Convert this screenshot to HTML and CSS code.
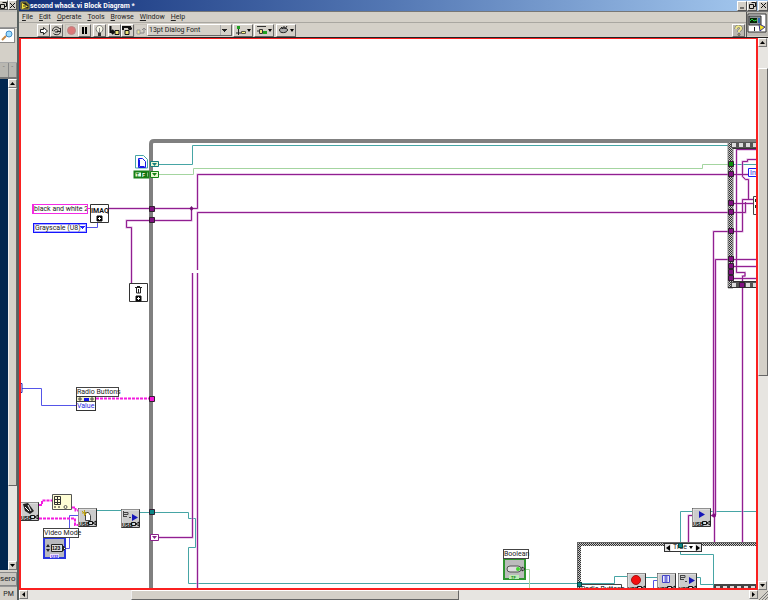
FILE: index.html
```html
<!DOCTYPE html>
<html lang="en">
<head>
<meta charset="utf-8">
<title>second whack.vi Block Diagram</title>
<link rel="stylesheet" href="styles.css">
</head>
<body>
<div class="desktop">
  <aside class="behind">
    <div class="behind-title">
      <button class="win-btn" aria-label="Restore background window"><svg width="7" height="7"><path d="M2.500 .5h4v4h-2M.5 2.500h4v4h-4z" class="ink"/></svg></button>
      <button class="win-btn" aria-label="Close background window"><svg width="7" height="7"><path d="M1 1l5 5M6 1l-5 5" class="ink"/></svg></button>
    </div>
    <div class="behind-menu"></div>
    <div class="behind-search">
      <svg width="15" height="13"><path d="M2 11l4-4" stroke="#c68642" stroke-width="2"/><circle cx="9" cy="5" r="3" fill="#9edcff" stroke="#3f87c5"/></svg>
    </div>
    <div class="behind-gap"></div>
    <div class="behind-tabs"><span>-</span><span>-</span></div>
    <div class="behind-body">
      <div class="navy"></div>
      <div class="scroll vertical">
        <button class="arrow" aria-label="Scroll background up"><svg width="5" height="3"><path d="M0 3L2.500 0L5 3z"/></svg></button>
        <div class="thumb behind-thumb"></div>
        <div class="track behind-track"></div>
        <button class="arrow" aria-label="Scroll background down"><svg width="5" height="3"><path d="M0 0L2.500 3L5 0z"/></svg></button>
      </div>
    </div>
    <div class="task">sero</div>
    <div class="clock">PM</div>
  </aside>

  <main class="window">
    <header class="titlebar">
      <svg width="10" height="10"><path d="M1 1h6v2h2v5H1z" fill="#222" stroke="#a99d35"/><path d="M2 2l6 3.500L2 8z" fill="#f5e33d"/><path d="M3 5h3" stroke="#333"/></svg>
      <h1>second whack.vi Block Diagram *</h1>
      <button class="win-btn" aria-label="Minimize"><svg width="7" height="7"><path d="M1 6h4" class="ink"/></svg></button>
      <button class="win-btn" aria-label="Restore"><svg width="7" height="7"><path d="M2.500 .5h4v4h-2M.5 2.500h4v4h-4z" class="ink"/></svg></button>
      <button class="win-btn close" aria-label="Close"><svg width="7" height="7"><path d="M1 1l5 5M6 1l-5 5" class="ink"/></svg></button>
    </header>

    <div class="bars">
      <div class="bar-rows">
        <nav class="menu">
          <a href="#"><u>F</u>ile</a><a href="#"><u>E</u>dit</a><a href="#"><u>O</u>perate</a><a href="#"><u>T</u>ools</a><a href="#"><u>B</u>rowse</a><a href="#"><u>W</u>indow</a><a href="#"><u>H</u>elp</a>
        </nav>
        <div class="toolbar">
          <button class="tool" aria-label="Run"><svg width="11" height="11"><path d="M2.500 4.500h3v-2l4 3.500l-4 3.500v-2h-3z" fill="#fff" stroke="#222"/></svg></button>
          <button class="tool" aria-label="Run continuously"><svg width="11" height="11"><path d="M1.500 6c0-5 6-5 7-2l1-1v3.500H6l1-1c-1-2-4-1-4 1M9.500 6c0 5-6 4-7 2.500M4 7h3" fill="none" stroke="#222"/></svg></button>
          <button class="tool flat gap" aria-label="Abort"><svg width="11" height="11"><circle cx="5.500" cy="5.500" r="4" fill="#dc7878" stroke="#b98484"/></svg></button>
          <button class="tool" aria-label="Pause"><svg width="11" height="11"><path d="M3 2h2v7H3zM6 2h2v7H6z"/></svg></button>
          <button class="tool gap" aria-label="Highlight execution"><svg width="11" height="11"><path d="M4 7.500C0 4 3 .5 5.500 .5S11 4 7 7.500z" fill="#f7f7e8" stroke="#777"/><path d="M5.500 3v4" stroke="#888"/><path d="M4 8h3v3H4z" fill="#333"/></svg></button>
          <button class="tool gap" aria-label="Step into"><svg width="11" height="11"><path d="M1.500 1v6h3M3 5l2 2l-2 2" fill="none" stroke="#111" stroke-width="2"/><path d="M6 5.500h4v4H6z" fill="#eee37b" stroke="#111"/></svg></button>
          <button class="tool" aria-label="Step over"><svg width="11" height="11"><path d="M1 5V2h7v3M6 3.500h4" fill="none" stroke="#111" stroke-width="2"/><path d="M3 5.500h4v4H3z" fill="#eee37b" stroke="#111"/></svg></button>
          <button class="tool flat" aria-label="Step out"><svg width="11" height="11"><path d="M2 5h3v4H2z" fill="#eee8a0" stroke="#999"/><path d="M5 8h4V3M7 5l2-2l2 2" fill="none" stroke="#888"/></svg></button>
          <select class="font-pick" aria-label="Text settings"><option>13pt Dialog Font</option></select>
          <button class="tool wide" aria-label="Align objects"><svg width="17" height="11"><path d="M2 1h3v3H2z" fill="#20a020"/><path d="M3.500 4v6M1 8h5" stroke="#222"/><path d="M6.500 6.500h4v2h-4z" fill="#fff58a" stroke="#554"/><path d="M12 4h4l-2 3z"/></svg></button>
          <button class="tool wide" aria-label="Distribute objects"><svg width="17" height="11"><path d="M1 1.500h9M1 6h4" stroke="#333"/><path d="M3.500 4.500h3v4h-3z" fill="#eee37b" stroke="#333"/><path d="M7 6h4v3H7z" fill="#20a020"/><path d="M12 4h4l-2 3z"/></svg></button>
          <button class="tool wide gap" aria-label="Reorder"><svg width="17" height="11"><path d="M1.500 5c0-3 8-3 8 0s-8 4-8 0M3 2l2 2M6 1v3M9 1L7 4" fill="#aaa" stroke="#222"/><path d="M12 4h4l-2 3z"/></svg></button>
          <button class="tool help" aria-label="Context help"><svg width="11" height="11"><path d="M3 4c0-4 6-3 5 0L6 6v1" fill="none" stroke="#666" stroke-width="3"/><path d="M3 4c0-4 6-3 5 0L6 6v1" fill="none" stroke="#f2e98c" stroke-width="2"/><circle cx="6" cy="9.500" r="1" fill="#e6db6a" stroke="#555"/></svg></button>
        </div>
      </div>
      <svg class="vi-icon" width="21" height="24"><path d="M1 2h18v18H1z" fill="#fff" stroke="#333"/><path d="M2 4h12v9H2z" fill="#8e959a" stroke="#333"/><path d="M3 6h7v5H3z" fill="#062606"/><path d="M3 9l2-2l2 2l3-1" fill="none" stroke="#20d040"/><path d="M12 6v5" stroke="#2f69b5" stroke-width="2"/><path d="M12 12l6 3l-5 4z" fill="#f1df26" stroke="#35358a"/><path d="M7.500 15v4" stroke="#222"/></svg>
    </div>

    <div class="work">
      <section class="canvas" aria-label="Block diagram">
        <svg class="wires" width="1200" height="1000" viewBox="21 39 1200 1000">
          <defs>
            <pattern id="hatch" width="2" height="2" patternUnits="userSpaceOnUse"><path d="M0 0h2v2H0z" fill="#c9c9c9"/><path d="M0 0h1v1H0zM1 1h1v1H1z" fill="#303030"/></pattern>
            <pattern id="film" width="7" height="6" patternUnits="userSpaceOnUse" x="730" y="142"><path d="M0 0h7v6H0z" fill="#555"/><path d="M2 1h4v4H2z" fill="#ddd"/></pattern>
            <pattern id="film-low" width="7" height="6" patternUnits="userSpaceOnUse" x="730" y="282"><path d="M0 0h7v6H0z" fill="#555"/><path d="M2 1h4v4H2z" fill="#ddd"/></pattern>
            <pattern id="film-case" width="7" height="8" patternUnits="userSpaceOnUse" x="714" y="584"><path d="M0 0h7v8H0z" fill="#444"/><path d="M2 2h4v4H2z" fill="#ddd"/></pattern>
            <g id="camera"><path d="M.5 .5h18v18H.5z" fill="#ccc" stroke="#333"/><path d="M1 18V1h17" fill="none" stroke="#eee"/><path d="M10.500 13.500h4v3h-4zM15 15l3-2v4z" fill="#ddd" stroke="#111"/><text x="1" y="18" class="usb">USB</text></g>
            <g id="cell"><path d="M-2.500-2.500h5v5h-5z" stroke="#302030"/></g>
            <g id="purple-wires" fill="none">
              <path d="M109 208.500H197.500V174.500H730M191.500 208.500V220.500H126.500V227.500H131.500V284"/>
              <path d="M197.500 270V212.500H730M192.500 273V537.500H159M197.500 273V588"/>
              <path d="M730 231.500H713.500V515M730 259.500H715.500V515M714.500 515V543M742.500 286V543M711 515.500H716M688.500 543V515.500H692"/>
              <path d="M757 149.500H736.500V272.500H745V276H742.500V285M757 159.500H747.500V161.500H742.500V176.500L745.500 179.500H748.500V199M733 174.500H748M733 203.500H753M733 231.500H742.500V199.500H753M733 212.500H745.500V202M733 259.500H757M733 266.500H757M733 278.500H757"/>
            </g>
          </defs>

          <g fill="none" stroke="#46a5a5">
            <path d="M159 164.500H192.500V145.500H730M733 164.500H757"/>
            <path d="M97 510.500H121M140 512.500H188.500V518.500H195.500V547.500H188.500V583.500H614.500V576.500H628"/>
            <path d="M692 511.500H680.500V554.500H713.500V588M711 511.500H757M646 577.500H657M697 577.500H700.500V584.500H714"/>
          </g>
          <path d="M159 174.500H193.500V168.500H702.500V164.500H730M526 569.500H529.500V588" fill="none" stroke="#a4d5a0"/>
          <use href="#purple-wires" stroke="#d9a5d9" stroke-width="2"/>
          <use href="#purple-wires" stroke="#911f91"/>
          <path d="M757 141H154q-3 0-3 3V1000" fill="none" stroke="#808080" stroke-width="4"/>

          <g fill="none" stroke="#5555e8"><path d="M86 227.500H97.500V223M22 388.500H41.500V405.500H76M66 548.500H69.500V515.500H78M653.500 588V580.500H657"/></g>
          <path d="M19 383.500h3v9h-3" fill="none" stroke="#2020b0"/>
          <g fill="none" stroke="#f41bdf"><path d="M86 208.500H90"/><path d="M39 505H42V500.500H52M72 507.500H75.500V510.500H78M39 518.500H75V525H78M96 398.500H151" stroke-width="2" stroke-dasharray="3 1"/></g>

          <!-- file path and true/false constants -->
          <path d="M135.500 155.500h8l4 4v8.500h-12z" fill="#fff" stroke="#46a5a5"/><path d="M138.500 158.500h4l3 3v6h-7z" fill="none" stroke="#1717e8"/><path d="M139.500 159.500v7h5" fill="none" stroke="#1717e8"/>
          <path d="M134.500 171.500h14v6h-14z" fill="#e9ffe5" stroke="#168016" stroke-width="2"/><path d="M141 172h6v5h-6z" fill="#127512"/><text x="136" y="177" class="tiny green">T</text><text x="142" y="177" class="tiny white">F</text>
          <path d="M150.500 161.500h8v5h-8z" fill="#e9f7d1" stroke="#157d7d"/><path d="M152 163h5l-2.500 3z" fill="#157d7d"/>
          <path d="M150.500 171.500h8v6h-8z" fill="#e9f7d1" stroke="#148014"/><path d="M152 173h5l-2.500 3z" fill="#148014"/>
          <path d="M150.500 534.500h8v6h-8z" fill="#fff" stroke="#8a218a"/><path d="M152 536h5l-2.500 3z" fill="#8a218a"/>
          <path d="M191.500 206l2 2.500l-2 2.500l-2-2.500z" fill="#711071"/>

          <!-- image functions -->
          <path d="M90.500 204.500h18v18h-18zM129.500 283.500h18v18h-18z" fill="#fff" stroke="#333"/>
          <text x="91" y="213" class="imaq">IMAQ</text>
          <path d="M97 216h5v5h-5zM136 296h5v5h-5z" stroke="#111"/><path d="M98 218.500h3M99.500 217v3M137 298.500h3M138.500 297v3" stroke="#fff"/>
          <path d="M135 287.500h7M137 286.500h3M136.500 288v5h4v-5M138.500 289v4" fill="none" stroke="#222"/>

          <!-- video mode and camera functions -->
          <use href="#camera" x="20" y="502"/><path d="M23 504l5-1l3 4l3 4l-4 3l-5-3z" fill="#222"/><path d="M25 507l4 4M28 505l3 6" stroke="#fff"/>
          <path d="M52.500 494.500h19v15h-19z" fill="#fffed5" stroke="#555"/><path d="M54.500 496.500h6v8h-6zM54 499.500h7M54 502.500h7M57.500 496v8" fill="none" stroke="#333"/><circle cx="65.500" cy="507" r="1.500" fill="none" stroke="#555"/><path d="M54 507h2M58 507h2" stroke="#222"/>
          <use href="#camera" x="78" y="508"/><path d="M85.500 512.500h3l2 3v5h-5z" fill="#fff" stroke="#444"/><path d="M82 513h5M84.500 510v6M82 511l4 4" stroke="#c0a414"/>
          <use href="#camera" x="121" y="509"/><path d="M123 512.500h5v2h-5M123 516.500h4M123.500 511v6M129 517.500h2" fill="none" stroke="#444"/><path d="M132 514l6 3.500l-6 3.500z" fill="#1515b8"/>
          <path d="M44 538h21v20H44z" fill="#b9b9be" stroke="#2835e0" stroke-width="2"/><path d="M46 547l2-3l2 3M46 549l2 3l2-3" fill="#222"/><path d="M51.500 544.500h11v7h-11z" fill="#ddd" stroke="#222"/><text x="52" y="550" class="tiny">123</text><path d="M63.500 546l2 2.500l-2 2z" fill="#fff" stroke="#222"/><path d="M50 554h9v4h-9z" fill="#edf"/><text x="51" y="558" class="micro blue">U32</text>

          <!-- boolean control -->
          <path d="M504 559h21v20h-21z" fill="#bcbcbc" stroke="#309530" stroke-width="2"/><rect x="507" y="566" width="14" height="6" rx="3" fill="#ddd" stroke="#555"/><circle cx="518" cy="569" r="2" fill="#44d632"/><path d="M522 567l3 2l-3 2z" fill="#fff" stroke="#222"/><path d="M509 575h10v4h-10z" fill="#bfedb7"/><text x="511" y="579" class="micro green">TF</text>

          <!-- sequence structure -->
          <path d="M728 142h5v146h-5z" fill="url(#hatch)" stroke="#888"/><path d="M731 142h26v6h-26z" fill="url(#film)"/><path d="M731 282h26v6h-26z" fill="url(#film-low)"/><path d="M733 148.500h24M733 281.500h24M728 287.500h29" stroke="#333"/>
          <path d="M748.500 168.500h9v8h-9z" fill="#fff" stroke="#1c1cf0"/><text x="750" y="175" class="small blue">Int</text><path d="M753.500 196.500h6v18h-6z" fill="#fff" stroke="#444"/><path d="M755 199h2v3h-2zM755 205h2v3h-2z" fill="#1b301b"/>
          <g fill="#811081"><use href="#cell" x="731" y="174"/><use href="#cell" x="731" y="203"/><use href="#cell" x="731" y="212"/><use href="#cell" x="731" y="231"/><use href="#cell" x="731" y="259"/><use href="#cell" x="731" y="266"/><use href="#cell" x="731" y="272"/><use href="#cell" x="731" y="278"/><use href="#cell" x="742" y="285"/><use href="#cell" x="152" y="209"/><use href="#cell" x="152" y="220"/></g>
          <use href="#cell" x="731" y="164" fill="#098f09"/><use href="#cell" x="152" y="399" fill="#f316d6"/><use href="#cell" x="152" y="512" fill="#0b8585"/>

          <!-- case structure -->
          <path d="M577 542h180v4H581v50h-4z" fill="url(#hatch)"/><path d="M577 542.500h180M577.500 542v50" stroke="#666"/>
          <path d="M714 584h43v8h-43z" fill="url(#film-case)"/>
          <path d="M580 584.500h41.500v8" fill="none" stroke="#444"/><text x="581" y="591" class="small">Radio Buttons</text>
          <use href="#camera" x="692" y="508"/><path d="M699 511l6 3.500l-6 3.500z" fill="#1515b8"/><circle cx="714" cy="515.500" r="2" fill="#811081"/>
          <use href="#camera" x="627" y="573"/><circle cx="636" cy="580" r="4.500" fill="#f41010" stroke="#a11"/>
          <use href="#camera" x="657" y="573"/><path d="M662.500 575.500h7v7h-7z" fill="#eef" stroke="#4545c5"/><path d="M666 576v6" stroke="#7777df" stroke-width="3"/>
          <use href="#camera" x="678" y="573"/><path d="M680 575.500h5v2h-5M680 579.500h4M680.500 575v5M685 581.500h2" fill="none" stroke="#444"/><path d="M689 577l6 3.500l-6 3.500z" fill="#1515b8"/>
        </svg>

        <input class="node string" aria-label="Image name" value="black and white 2">
        <select class="node ring" aria-label="Image type"><option>Grayscale (U8)</option></select>
        <span class="node caption radio-label">Radio Buttons</span>
        <div class="node property"><svg width="18" height="5"><path d="M0 0h18v5H0z" fill="#f0edc5"/><path d="M1 2h4M3 0v4M13 2h4M15 0v4" stroke="#444"/><path d="M7 1h5v3H7z" fill="#1010ed"/></svg><span>Value</span></div>
        <span class="node caption video-label">Video Mode</span>
        <span class="node caption boolean-label">Boolean</span>
        <div class="node selector"><button aria-label="Previous case"><svg width="4" height="6"><path d="M4 0v6L0 3z"/></svg></button><span>True</span><svg width="4" height="3"><path d="M0 0h4L2 3z"/></svg><button aria-label="Next case"><svg width="4" height="6"><path d="M0 0v6l4-3z"/></svg></button></div>
        <i class="node tunnel"></i><i class="node tunnel input-tunnel"></i>
      </section>

      <div class="scroll vertical main-v">
        <button class="arrow" aria-label="Scroll up"><svg width="5" height="3"><path d="M0 3L2.500 0L5 3z"/></svg></button>
        <div class="track v-before"></div><div class="thumb v-thumb"></div><div class="track v-after"></div>
        <button class="arrow" aria-label="Scroll down"><svg width="5" height="3"><path d="M0 0L2.500 3L5 0z"/></svg></button>
      </div>
      <div class="scroll horizontal">
        <button class="arrow" aria-label="Scroll left"><svg width="3" height="5"><path d="M3 0v5L0 2.500z"/></svg></button>
        <div class="track h-before"></div><div class="thumb h-thumb"></div><div class="track h-after"></div>
        <button class="arrow" aria-label="Scroll right"><svg width="3" height="5"><path d="M0 0v5l3-2.500z"/></svg></button>
      </div>
      <svg class="grip" width="10" height="10"><path d="M1 10l9-9M4 10l6-6M7 10l3-3" stroke="#777"/></svg>
    </div>
  </main>
</div>
</body>
</html>
```
FILE: styles.css
```css
* { box-sizing: border-box; }
body { margin: 0; background: #d4d0c8; color: #222; font: 7px/9px Roboto, sans-serif; }
button, input, select { font: inherit; color: inherit; margin: 0; padding: 0; border-radius: 0; appearance: none; }
svg { display: block; flex: none; }
.desktop { display: grid; grid-template-columns: 19px minmax(0, 1fr); height: 100vh; overflow: hidden; }

.behind { display: flex; flex-direction: column; min-height: 0; overflow: hidden; border-right: 2px solid #58605f; }
.behind-title { display: flex; justify-content: flex-end; height: 12px; background: #c4c2bd; }
.behind-menu { height: 16px; border-bottom: 1px solid #999; }
.behind-search { height: 15px; margin-right: 2px; background: #fff; border: 1px solid #888; border-left: 0; }
.behind-gap { height: 20px; border-bottom: 1px solid #aaa; }
.behind-tabs { display: flex; height: 16px; color: #777; background: #b9b7b1; border-bottom: 2px solid #777; }
.behind-tabs span { flex: 1; text-align: center; border-right: 1px solid #888; }
.behind-body { flex: 1; display: flex; min-height: 0; }
.navy { flex: 1; background: #00264f; }
.task { height: 14px; margin-top: 2px; font-size: 8px; line-height: 12px; border: 1px solid #888; border-left: 0; background: #c9c6c0; white-space: nowrap; }
.clock { height: 14px; line-height: 14px; text-align: center; border-top: 1px solid #999; }

.window { display: flex; flex-direction: column; min-width: 0; min-height: 0; }
.titlebar { display: flex; align-items: center; height: 11px; padding-left: 1px; background: linear-gradient(90deg, #12307a, #5478b4 50%, #a6caf0); }
.titlebar h1 { flex: 1; margin: 0; color: #fff; font: bold 7px/10px Roboto, sans-serif; white-space: nowrap; }
.win-btn { display: grid; place-items: center; width: 10px; height: 10px; background: #d4d0c8; border: 1px solid #555; border-top-color: #fff; border-left-color: #fff; }
.close { margin-left: 1px; }
.ink { fill: none; stroke: #111; }

.bars { display: flex; height: 27px; border-top: 1px solid #777; border-bottom: 1px solid #222; }
.bar-rows { flex: 1; min-width: 0; border-right: 1px solid #555; }
.menu { display: flex; align-items: center; gap: 6px; height: 11px; padding-left: 3px; border-bottom: 1px solid #a9a7a1; }
.menu a { color: #222; text-decoration: none; }
.toolbar { display: flex; align-items: center; height: 14px; padding: 0 1px 0 18px; }
.tool { display: grid; place-items: center; width: 13px; height: 13px; overflow: hidden; background: #d4d0c8; border: 1px solid #666; border-top-color: #fff; border-left-color: #fff; }
.tool.flat { border-color: #c7c3bb; }
.tool.wide { width: 20px; margin-left: 1px; }
.tool.gap { margin-left: 2px; }
.tool.help { margin-left: auto; background: #bbb8b0; }
.font-pick { width: 85px; height: 12px; padding-left: 1px; border: 1px solid #666; border-top-color: #fff; border-left-color: #fff; background: linear-gradient(#222, #222) right 4px top 4px / 5px 1px no-repeat, linear-gradient(#222, #222) right 5px top 5px / 3px 1px no-repeat, linear-gradient(#222, #222) right 6px top 6px / 1px 1px no-repeat, linear-gradient(#aaa, #aaa) right 10px center / 1px 10px no-repeat, #d4d0c8; }
.vi-icon { background: #bdbbb5; }

.work { flex: 1; display: grid; grid-template: minmax(0, 1fr) 10px / minmax(0, 1fr) 10px; min-height: 0; }
.canvas { position: relative; overflow: hidden; background: #fff; border: 2px solid #fa2020; border-top-width: 1px; }
.wires { position: absolute; inset: 0 auto auto 0; }
.scroll { display: flex; background: #e7e5e1; }
.vertical { flex-direction: column; width: 9px; }
.main-v { width: 10px; }
.arrow { display: grid; place-items: center; flex: none; width: 9px; height: 9px; background: #d4d0c8; border: 1px solid #777; border-top-color: #fff; border-left-color: #fff; }
.thumb { background: #d4d0c8; border: 1px solid #666; border-top-color: #fff; border-left-color: #eee; }
.behind-thumb { flex: 399; }
.behind-track { flex: 76; }
.v-before { flex: 21; }
.v-thumb { flex: 308; }
.v-after { flex: 206; }
.h-before { flex: 103; }
.h-thumb { flex: 327; }
.h-after { flex: 290; }
.grip { background: #d4d0c8; }

.node { position: absolute; }
.string { left: 11px; top: 165px; width: 56px; height: 10px; border: 1px solid #f42be5; border-left-width: 2px; background: #fff; }
.ring { left: 12px; top: 184px; width: 54px; height: 10px; border: 1px solid #1515ff; box-shadow: inset 0 0 0 1px #aaf; padding-left: 1px; background: linear-gradient(#22f, #22f) right 1px top 2px / 5px 1px no-repeat, linear-gradient(#22f, #22f) right 2px top 3px / 3px 1px no-repeat, linear-gradient(#22f, #22f) right 3px top 4px / 1px 1px no-repeat, #fff; }
.ring, .string { line-height: 8px; }
.caption { height: 10px; border: 1px solid #444; background: #fff; line-height: 8px; white-space: nowrap; }
.radio-label { left: 55px; top: 348px; width: 43px; }
.video-label { left: 22px; top: 489px; width: 36px; }
.boolean-label { left: 482px; top: 510px; width: 26px; }
.property { left: 55px; top: 357px; width: 20px; border: 1px solid #333; background: #fff; color: #2929df; line-height: 8px; }
.property svg { border-bottom: 1px solid #444; }
.selector { left: 643px; top: 504px; width: 38px; height: 9px; display: flex; align-items: center; justify-content: space-between; line-height: 7px; border: 1px solid #333; background: #fff; }
.selector button { display: grid; place-items: center; width: 6px; height: 7px; border: 0; background: #e2e2e2; }
.tunnel { left: 657px; top: 504px; width: 5px; height: 5px; border: 1px solid #054545; background: #0b8585; }
.input-tunnel { left: 556px; top: 543px; }

.usb { font: bold 5px "Liberation Sans", sans-serif; }
.imaq { font: bold 7px Roboto, sans-serif; fill: #111; }
.tiny { font: bold 5px "Liberation Sans", sans-serif; }
.micro { font: bold 4px "Liberation Sans", sans-serif; }
.small { font: 7px Roboto, sans-serif; }
.green { fill: #168016; }
.white { fill: #fff; }
.blue { fill: #2929df; }
```
